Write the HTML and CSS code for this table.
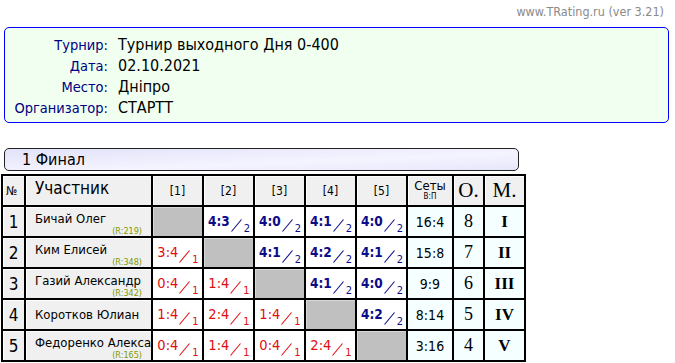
FILE: index.html
```html
<!DOCTYPE html>
<html lang="ru">
<head>
<meta charset="utf-8">
<title>Турнир выходного Дня 0-400</title>
<link rel="stylesheet" href="styles.css">
</head>
<body>
<div class="site">www.TRating.ru (ver 3.21)</div>
<div class="info">
  <div class="lbl">Турнир:</div><div class="val">Турнир выходного Дня 0-400</div>
  <div class="lbl">Дата:</div><div class="val">02.10.2021</div>
  <div class="lbl">Место:</div><div class="val">Дніпро</div>
  <div class="lbl">Организатор:</div><div class="val">СТАРТТ</div>
</div>
<div class="stage">1 Финал</div>
<table class="grid">
  <colgroup>
    <col class="c-num"><col class="c-name"><col class="c-sc"><col class="c-sc"><col class="c-sc"><col class="c-sc"><col class="c-sc"><col class="c-sets"><col class="c-o"><col class="c-m">
  </colgroup>
  <thead>
    <tr>
      <th class="h-num">№</th>
      <th class="h-name">Участник</th>
      <th class="h-sc">[1]</th>
      <th class="h-sc">[2]</th>
      <th class="h-sc">[3]</th>
      <th class="h-sc">[4]</th>
      <th class="h-sc">[5]</th>
      <th class="h-sets">Сеты<span>В:П</span></th>
      <th class="h-serif">O.</th>
      <th class="h-serif">M.</th>
    </tr>
  </thead>
  <tbody>
    <tr>
      <td class="num">1</td>
      <td class="name"><div class="nm">Бичай Олег</div><div class="rt">(R:219)</div></td>
      <td class="diag"></td>
      <td class="sc win"><div class="s"><b>4:3</b><svg class="sl" viewBox="0 0 11 13"><line x1="0.5" y1="12.5" x2="10.5" y2="0.5"/></svg><sub>2</sub></div></td>
      <td class="sc win"><div class="s"><b>4:0</b><svg class="sl" viewBox="0 0 11 13"><line x1="0.5" y1="12.5" x2="10.5" y2="0.5"/></svg><sub>2</sub></div></td>
      <td class="sc win"><div class="s"><b>4:1</b><svg class="sl" viewBox="0 0 11 13"><line x1="0.5" y1="12.5" x2="10.5" y2="0.5"/></svg><sub>2</sub></div></td>
      <td class="sc win"><div class="s"><b>4:0</b><svg class="sl" viewBox="0 0 11 13"><line x1="0.5" y1="12.5" x2="10.5" y2="0.5"/></svg><sub>2</sub></div></td>
      <td class="sets">16:4</td>
      <td class="pts">8</td>
      <td class="pl">I</td>
    </tr>
    <tr>
      <td class="num">2</td>
      <td class="name"><div class="nm">Ким Елисей</div><div class="rt">(R:348)</div></td>
      <td class="sc loss"><div class="s"><b>3:4</b><svg class="sl" viewBox="0 0 11 13"><line x1="0.5" y1="12.5" x2="10.5" y2="0.5"/></svg><sub>1</sub></div></td>
      <td class="diag"></td>
      <td class="sc win"><div class="s"><b>4:1</b><svg class="sl" viewBox="0 0 11 13"><line x1="0.5" y1="12.5" x2="10.5" y2="0.5"/></svg><sub>2</sub></div></td>
      <td class="sc win"><div class="s"><b>4:2</b><svg class="sl" viewBox="0 0 11 13"><line x1="0.5" y1="12.5" x2="10.5" y2="0.5"/></svg><sub>2</sub></div></td>
      <td class="sc win"><div class="s"><b>4:1</b><svg class="sl" viewBox="0 0 11 13"><line x1="0.5" y1="12.5" x2="10.5" y2="0.5"/></svg><sub>2</sub></div></td>
      <td class="sets">15:8</td>
      <td class="pts">7</td>
      <td class="pl">II</td>
    </tr>
    <tr>
      <td class="num">3</td>
      <td class="name"><div class="nm">Газий Александр</div><div class="rt">(R:342)</div></td>
      <td class="sc loss"><div class="s"><b>0:4</b><svg class="sl" viewBox="0 0 11 13"><line x1="0.5" y1="12.5" x2="10.5" y2="0.5"/></svg><sub>1</sub></div></td>
      <td class="sc loss"><div class="s"><b>1:4</b><svg class="sl" viewBox="0 0 11 13"><line x1="0.5" y1="12.5" x2="10.5" y2="0.5"/></svg><sub>1</sub></div></td>
      <td class="diag"></td>
      <td class="sc win"><div class="s"><b>4:1</b><svg class="sl" viewBox="0 0 11 13"><line x1="0.5" y1="12.5" x2="10.5" y2="0.5"/></svg><sub>2</sub></div></td>
      <td class="sc win"><div class="s"><b>4:0</b><svg class="sl" viewBox="0 0 11 13"><line x1="0.5" y1="12.5" x2="10.5" y2="0.5"/></svg><sub>2</sub></div></td>
      <td class="sets">9:9</td>
      <td class="pts">6</td>
      <td class="pl">III</td>
    </tr>
    <tr>
      <td class="num">4</td>
      <td class="name"><div class="nm nm-solo">Коротков Юлиан</div></td>
      <td class="sc loss"><div class="s"><b>1:4</b><svg class="sl" viewBox="0 0 11 13"><line x1="0.5" y1="12.5" x2="10.5" y2="0.5"/></svg><sub>1</sub></div></td>
      <td class="sc loss"><div class="s"><b>2:4</b><svg class="sl" viewBox="0 0 11 13"><line x1="0.5" y1="12.5" x2="10.5" y2="0.5"/></svg><sub>1</sub></div></td>
      <td class="sc loss"><div class="s"><b>1:4</b><svg class="sl" viewBox="0 0 11 13"><line x1="0.5" y1="12.5" x2="10.5" y2="0.5"/></svg><sub>1</sub></div></td>
      <td class="diag"></td>
      <td class="sc win"><div class="s"><b>4:2</b><svg class="sl" viewBox="0 0 11 13"><line x1="0.5" y1="12.5" x2="10.5" y2="0.5"/></svg><sub>2</sub></div></td>
      <td class="sets">8:14</td>
      <td class="pts">5</td>
      <td class="pl">IV</td>
    </tr>
    <tr>
      <td class="num">5</td>
      <td class="name"><div class="nm">Федоренко Александр</div><div class="rt">(R:165)</div></td>
      <td class="sc loss"><div class="s"><b>0:4</b><svg class="sl" viewBox="0 0 11 13"><line x1="0.5" y1="12.5" x2="10.5" y2="0.5"/></svg><sub>1</sub></div></td>
      <td class="sc loss"><div class="s"><b>1:4</b><svg class="sl" viewBox="0 0 11 13"><line x1="0.5" y1="12.5" x2="10.5" y2="0.5"/></svg><sub>1</sub></div></td>
      <td class="sc loss"><div class="s"><b>0:4</b><svg class="sl" viewBox="0 0 11 13"><line x1="0.5" y1="12.5" x2="10.5" y2="0.5"/></svg><sub>1</sub></div></td>
      <td class="sc loss"><div class="s"><b>2:4</b><svg class="sl" viewBox="0 0 11 13"><line x1="0.5" y1="12.5" x2="10.5" y2="0.5"/></svg><sub>1</sub></div></td>
      <td class="diag"></td>
      <td class="sets">3:16</td>
      <td class="pts">4</td>
      <td class="pl">V</td>
    </tr>
  </tbody>
</table>
</body>
</html>
```
FILE: styles.css
```css
html, body {
  margin: 0;
  padding: 0;
  background: #fff;
}
body {
  font-family: "DejaVu Sans Condensed", "DejaVu Sans", sans-serif;
  color: #000;
}
.site {
  height: 27px;
  box-sizing: border-box;
  padding: 4px 11px 0 0;
  text-align: right;
  font-size: 12.5px;
  color: #8a8a8a;
  line-height: 15px;
}
.info {
  margin-left: 4px;
  width: 665px;
  height: 96px;
  box-sizing: border-box;
  border: 1px solid #0000ff;
  border-radius: 5px;
  background: #f0fff0;
  padding: 6px 0 0 0;
  display: grid;
  grid-template-columns: 103px auto;
  column-gap: 10px;
  grid-auto-rows: 21px;
  align-items: center;
}
.lbl {
  text-align: right;
  color: #000080;
  font-size: 14.5px;
}
.val {
  color: #000;
  font-size: 16px;
}
.stage {
  margin: 25px 0 0 4px;
  width: 515px;
  height: 23px;
  box-sizing: border-box;
  border: 1px solid #222;
  border-radius: 5px;
  background: linear-gradient(to bottom right, #e2e2fa, #f4f4ff 60%, #e6e6fb);
  padding-left: 17px;
  font-size: 16px;
  line-height: 21px;
}
.grid {
  margin: 3px 0 0 1px;
  border-collapse: collapse;
  table-layout: fixed;
  width: 523px;
}
.c-num { width: 23px; }
.c-name { width: 127px; }
.c-sc { width: 51px; }
.c-sets { width: 46px; }
.c-o { width: 31px; }
.c-m { width: 41px; }
.grid tr {
  height: 31px;
}
.grid th, .grid td {
  border: 2px solid #000;
  padding: 0;
  overflow: hidden;
  white-space: nowrap;
}
.grid th {
  background: #f0f0f0;
  font-weight: normal;
  box-shadow: inset 1px 1px 0 #fff;
}
.h-num {
  font-size: 12px;
  text-align: left;
  padding-left: 3px !important;
}
.h-name {
  font-size: 17px;
  text-align: left;
  padding-left: 9px !important;
  vertical-align: top;
  padding-top: 2px !important;
}
.h-sc {
  font-size: 12px;
  text-align: center;
}
.h-sets {
  font-size: 13px;
  line-height: 13px;
  text-align: center;
}
.h-sets span {
  display: block;
  font-size: 8px;
  line-height: 10px;
}
.h-serif {
  font-family: "Liberation Serif", serif;
  font-size: 21px;
  text-align: center;
}
.num {
  background: #f0f0f0;
  font-size: 17px;
  text-align: center;
  box-shadow: inset 1px 1px 0 #fff;
}
.name {
  background: #f0f0f0;
  vertical-align: top;
  box-shadow: inset 1px 1px 0 #fff;
}
.nm {
  font-size: 13px;
  padding: 5px 0 0 9px;
  line-height: 14px;
}
.nm-solo {
  padding-top: 8px;
}
.rt {
  font-size: 9px;
  line-height: 10px;
  color: #7f9a00;
  text-align: right;
  padding-right: 9px;
}
.diag {
  background: #c0c0c0;
  box-shadow: inset 1px 1px 0 #d8d8d8;
}
.sc {
  background: #fff;
  vertical-align: top;
  padding-top: 7px !important;
}
.s {
  display: flex;
  justify-content: center;
  align-items: flex-start;
  height: 21px;
  padding-left: 1px;
}
.s b {
  font-size: 14px;
  line-height: 14px;
}
.win b {
  font-size: 13.5px;
}
.win {
  color: #0c0c88;
}
.loss {
  color: #e01010;
}
.loss b {
  font-weight: normal;
  font-size: 14.5px;
}
.sl {
  display: block;
  width: 11px;
  height: 13px;
  margin: 5px 0 0 1px;
}
.sl line {
  stroke: currentColor;
  stroke-width: 1.1;
}
.s sub {
  display: block;
  font-size: 11px;
  line-height: 11px;
  margin: 9px 0 0 2px;
}
.sets {
  background: #f5ffff;
  font-size: 14px;
  text-align: center;
}
.pts {
  background: #f5ffff;
  font-family: "Liberation Serif", serif;
  font-size: 18px;
  text-align: center;
}
.pl {
  background: #f5ffff;
  font-family: "Liberation Serif", serif;
  font-weight: bold;
  font-size: 17px;
  text-align: center;
}
```
